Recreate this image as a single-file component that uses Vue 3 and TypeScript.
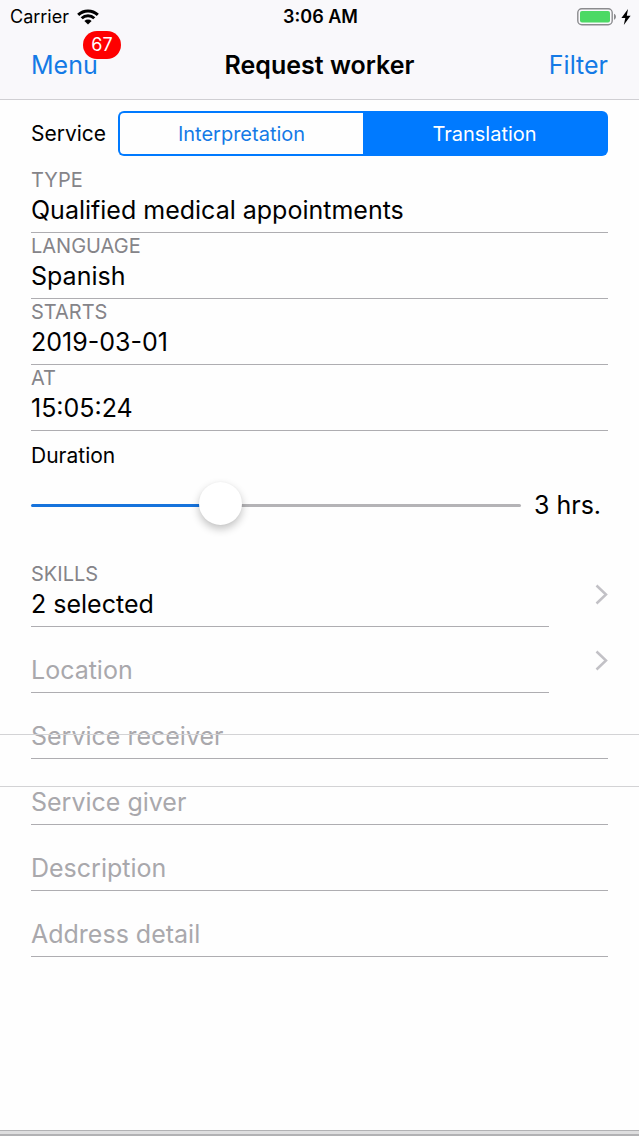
<script setup lang="ts">
import { computed, ref } from 'vue'

interface Field {
  id: string
  label: string
  value: string
  disclosure?: boolean
}

const services = ['Interpretation', 'Translation']
const service = ref('Translation')
const hours = ref(3)
const maxHours = 8
const unread = 67

const schedule = ref<Field[]>([
  { id: 'type', label: 'Type', value: 'Qualified medical appointments' },
  { id: 'language', label: 'Language', value: 'Spanish' },
  { id: 'starts', label: 'Starts', value: '2019-03-01' },
  { id: 'at', label: 'At', value: '15:05:24' },
])

const details = ref<Field[]>([
  { id: 'skills', label: 'Skills', value: '2 selected', disclosure: true },
  { id: 'location', label: 'Location', value: '', disclosure: true },
  { id: 'receiver', label: 'Service receiver', value: '' },
  { id: 'giver', label: 'Service giver', value: '' },
  { id: 'description', label: 'Description', value: '' },
  { id: 'address', label: 'Address detail', value: '' },
])

const fill = computed(() => `${(hours.value / maxHours) * 100}%`)
</script>

<template>
  <div class="screen">
    <header class="top">
      <div class="status">
        <div class="carrier">
          <span>Carrier</span>
          <svg class="wifi" viewBox="0 0 22 16" aria-hidden="true">
            <path d="M1.2 5.9a14 14 0 0 1 19.6 0" />
            <path d="M4.7 9.3a9 9 0 0 1 12.6 0" />
            <path class="solid" d="M11 15.6 7.4 12a5.2 5.2 0 0 1 7.2 0z" />
          </svg>
        </div>
        <span class="clock">3:06 AM</span>
        <div class="power">
          <svg class="battery" viewBox="0 0 40 18" aria-hidden="true">
            <rect class="case" x="0.8" y="0.8" width="34.4" height="16" rx="4" />
            <rect class="charge" x="3" y="3" width="30" height="11.6" rx="2" />
            <path class="tip" d="M37 5.8c2.6 1 2.6 5 0 6z" />
          </svg>
          <svg class="bolt" viewBox="0 0 10 16" aria-hidden="true">
            <path d="M7 0 0.4 9h3.9L2.8 16 9.6 6.8H5.8z" />
          </svg>
        </div>
      </div>
      <nav class="nav">
        <button type="button" class="link menu">Menu<span class="badge">{{ unread }}</span></button>
        <h1>Request worker</h1>
        <button type="button" class="link filter">Filter</button>
      </nav>
    </header>

    <main class="form">
      <div class="service" role="group" aria-labelledby="service-label">
        <span id="service-label" class="service-label">Service</span>
        <div class="segments">
          <button
            v-for="s in services"
            :key="s"
            type="button"
            class="segment"
            :class="{ active: service === s }"
            :aria-pressed="service === s"
            @click="service = s"
          >{{ s }}</button>
        </div>
      </div>

      <div v-for="f in schedule" :key="f.id" class="field">
        <label :for="f.id" class="caption">{{ f.label }}</label>
        <input :id="f.id" v-model="f.value" type="text" />
      </div>

      <div class="duration">
        <label for="duration" class="duration-label">Duration</label>
        <div class="slider-row">
          <input id="duration" v-model.number="hours" class="slider" type="range" min="0" :max="maxHours" :style="{ '--fill': fill }" />
          <output for="duration" class="hours">{{ hours }} hrs.</output>
        </div>
      </div>

      <div v-for="f in details" :key="f.id" class="row">
        <div class="field">
          <label v-if="f.value" :for="f.id" class="caption">{{ f.label }}</label>
          <input :id="f.id" v-model="f.value" type="text" :placeholder="f.label" :aria-label="f.label" />
        </div>
        <button v-if="f.disclosure" type="button" class="more" :aria-label="`Choose ${f.label}`">
          <svg viewBox="0 0 13 21" aria-hidden="true"><path d="M1.5 1.5 11 10.5 1.5 19.5" /></svg>
        </button>
      </div>
    </main>

    <div class="picker-band" aria-hidden="true"></div>
    <footer class="edge"></footer>
  </div>
</template>

<style>
body {
  margin: 0;
  background: #fefefe;
}
</style>

<style scoped>
* {
  box-sizing: border-box;
}
.screen {
  position: relative;
  display: flex;
  flex-direction: column;
  min-height: 100vh;
  background: #fefefe;
  color: #000;
  font-family: Inter, "Liberation Sans", sans-serif;
}
button,
input {
  margin: 0;
  padding: 0;
  border: 0;
  background: none;
  font: inherit;
  color: inherit;
}
.top {
  background: #f9f8fb;
  border-bottom: 1px solid #d0cfd3;
}
.status {
  display: grid;
  grid-template-columns: 1fr auto 1fr;
  align-items: center;
  height: 34px;
  padding: 0 8px 0 10px;
  font-size: 18px;
  line-height: 32px;
}
.carrier,
.power {
  display: flex;
  align-items: center;
  gap: 8px;
}
.power {
  justify-content: flex-end;
  gap: 4px;
}
.clock {
  font-weight: 600;
}
.wifi {
  width: 22px;
  height: 16px;
  fill: none;
  stroke: #000;
  stroke-width: 3;
}
.wifi .solid {
  fill: #000;
  stroke: none;
}
.battery {
  width: 40px;
  height: 18px;
}
.case {
  fill: none;
  stroke: #8b8b8e;
  stroke-width: 1.4;
}
.charge {
  fill: #4cd964;
}
.tip {
  fill: #8b8b8e;
}
.bolt {
  width: 10px;
  height: 16px;
}
.nav {
  display: grid;
  grid-template-columns: 1fr auto 1fr;
  align-items: center;
  height: 65px;
  padding: 0 31px 3px;
  font-size: 25px;
  line-height: 32px;
}
h1 {
  margin: 0;
  font-size: 25px;
  font-weight: 600;
}
.link {
  position: relative;
  color: #147ae6;
}
.menu {
  justify-self: start;
}
.filter {
  justify-self: end;
}
.badge {
  position: absolute;
  top: -18px;
  right: -23px;
  padding: 0 8px;
  border-radius: 14px;
  background: #fe0000;
  color: #fff;
  font-size: 18px;
  line-height: 28px;
}
.form {
  padding: 11px 31px 0;
}
.service {
  display: flex;
  align-items: center;
  margin-bottom: 11px;
}
.service-label {
  width: 87px;
  font-size: 21px;
}
.segments {
  display: flex;
  flex: 1;
  height: 45px;
}
.segment {
  flex: 1;
  border: 2px solid #007aff;
  color: #147ae6;
  font-size: 20px;
}
.segment:first-child {
  border-right: 0;
  border-radius: 6px 0 0 6px;
}
.segment:last-child {
  border-left: 0;
  border-radius: 0 6px 6px 0;
}
.segment.active {
  background: #007aff;
  color: #fff;
}
.field {
  display: flex;
  flex: 1;
  flex-direction: column;
  justify-content: flex-end;
  height: 66px;
  border-bottom: 1px solid #aeadb1;
}
.caption {
  color: #858489;
  font-size: 20px;
  line-height: 24px;
  text-transform: uppercase;
}
.field input {
  width: 100%;
  height: 40px;
  padding-bottom: 4px;
  font-size: 25px;
  outline: none;
}
.field input::placeholder {
  color: #a9a8ac;
  opacity: 1;
}
.duration {
  padding: 10px 0 28px;
}
.duration-label {
  display: block;
  font-size: 21px;
  line-height: 30px;
}
.slider-row {
  display: flex;
  align-items: center;
  gap: 13px;
  height: 56px;
  margin-top: 6px;
}
.slider {
  flex: 1;
  min-width: 0;
  height: 44px;
  appearance: none;
}
.slider::-webkit-slider-runnable-track {
  height: 3px;
  border-radius: 2px;
  background: linear-gradient(to right, #1673dc var(--fill), #b4b3b6 var(--fill));
}
.slider::-webkit-slider-thumb {
  width: 43px;
  height: 43px;
  margin-top: -22px;
  appearance: none;
  border-radius: 50%;
  background: #fff;
  box-shadow: 0 4px 8px rgba(0, 0, 0, 0.24), 0 0 2px rgba(0, 0, 0, 0.04);
}
.hours {
  width: 74px;
  font-size: 25px;
  white-space: nowrap;
}
.row {
  display: flex;
}
.more {
  display: flex;
  align-items: center;
  justify-content: flex-end;
  width: 59px;
  height: 66px;
}
.more svg {
  width: 13px;
  height: 21px;
  fill: none;
  stroke: #c2c1c6;
  stroke-width: 2.5;
}
.picker-band {
  position: absolute;
  top: 734px;
  left: 0;
  right: 0;
  height: 53px;
  border-top: 1px solid #d3d3d5;
  border-bottom: 1px solid #d3d3d5;
  pointer-events: none;
}
.edge {
  height: 6px;
  margin-top: auto;
  border-top: 1px solid #b2b2b4;
  border-bottom: 2px solid #b2b2b4;
  background: #dededf;
}
</style>
